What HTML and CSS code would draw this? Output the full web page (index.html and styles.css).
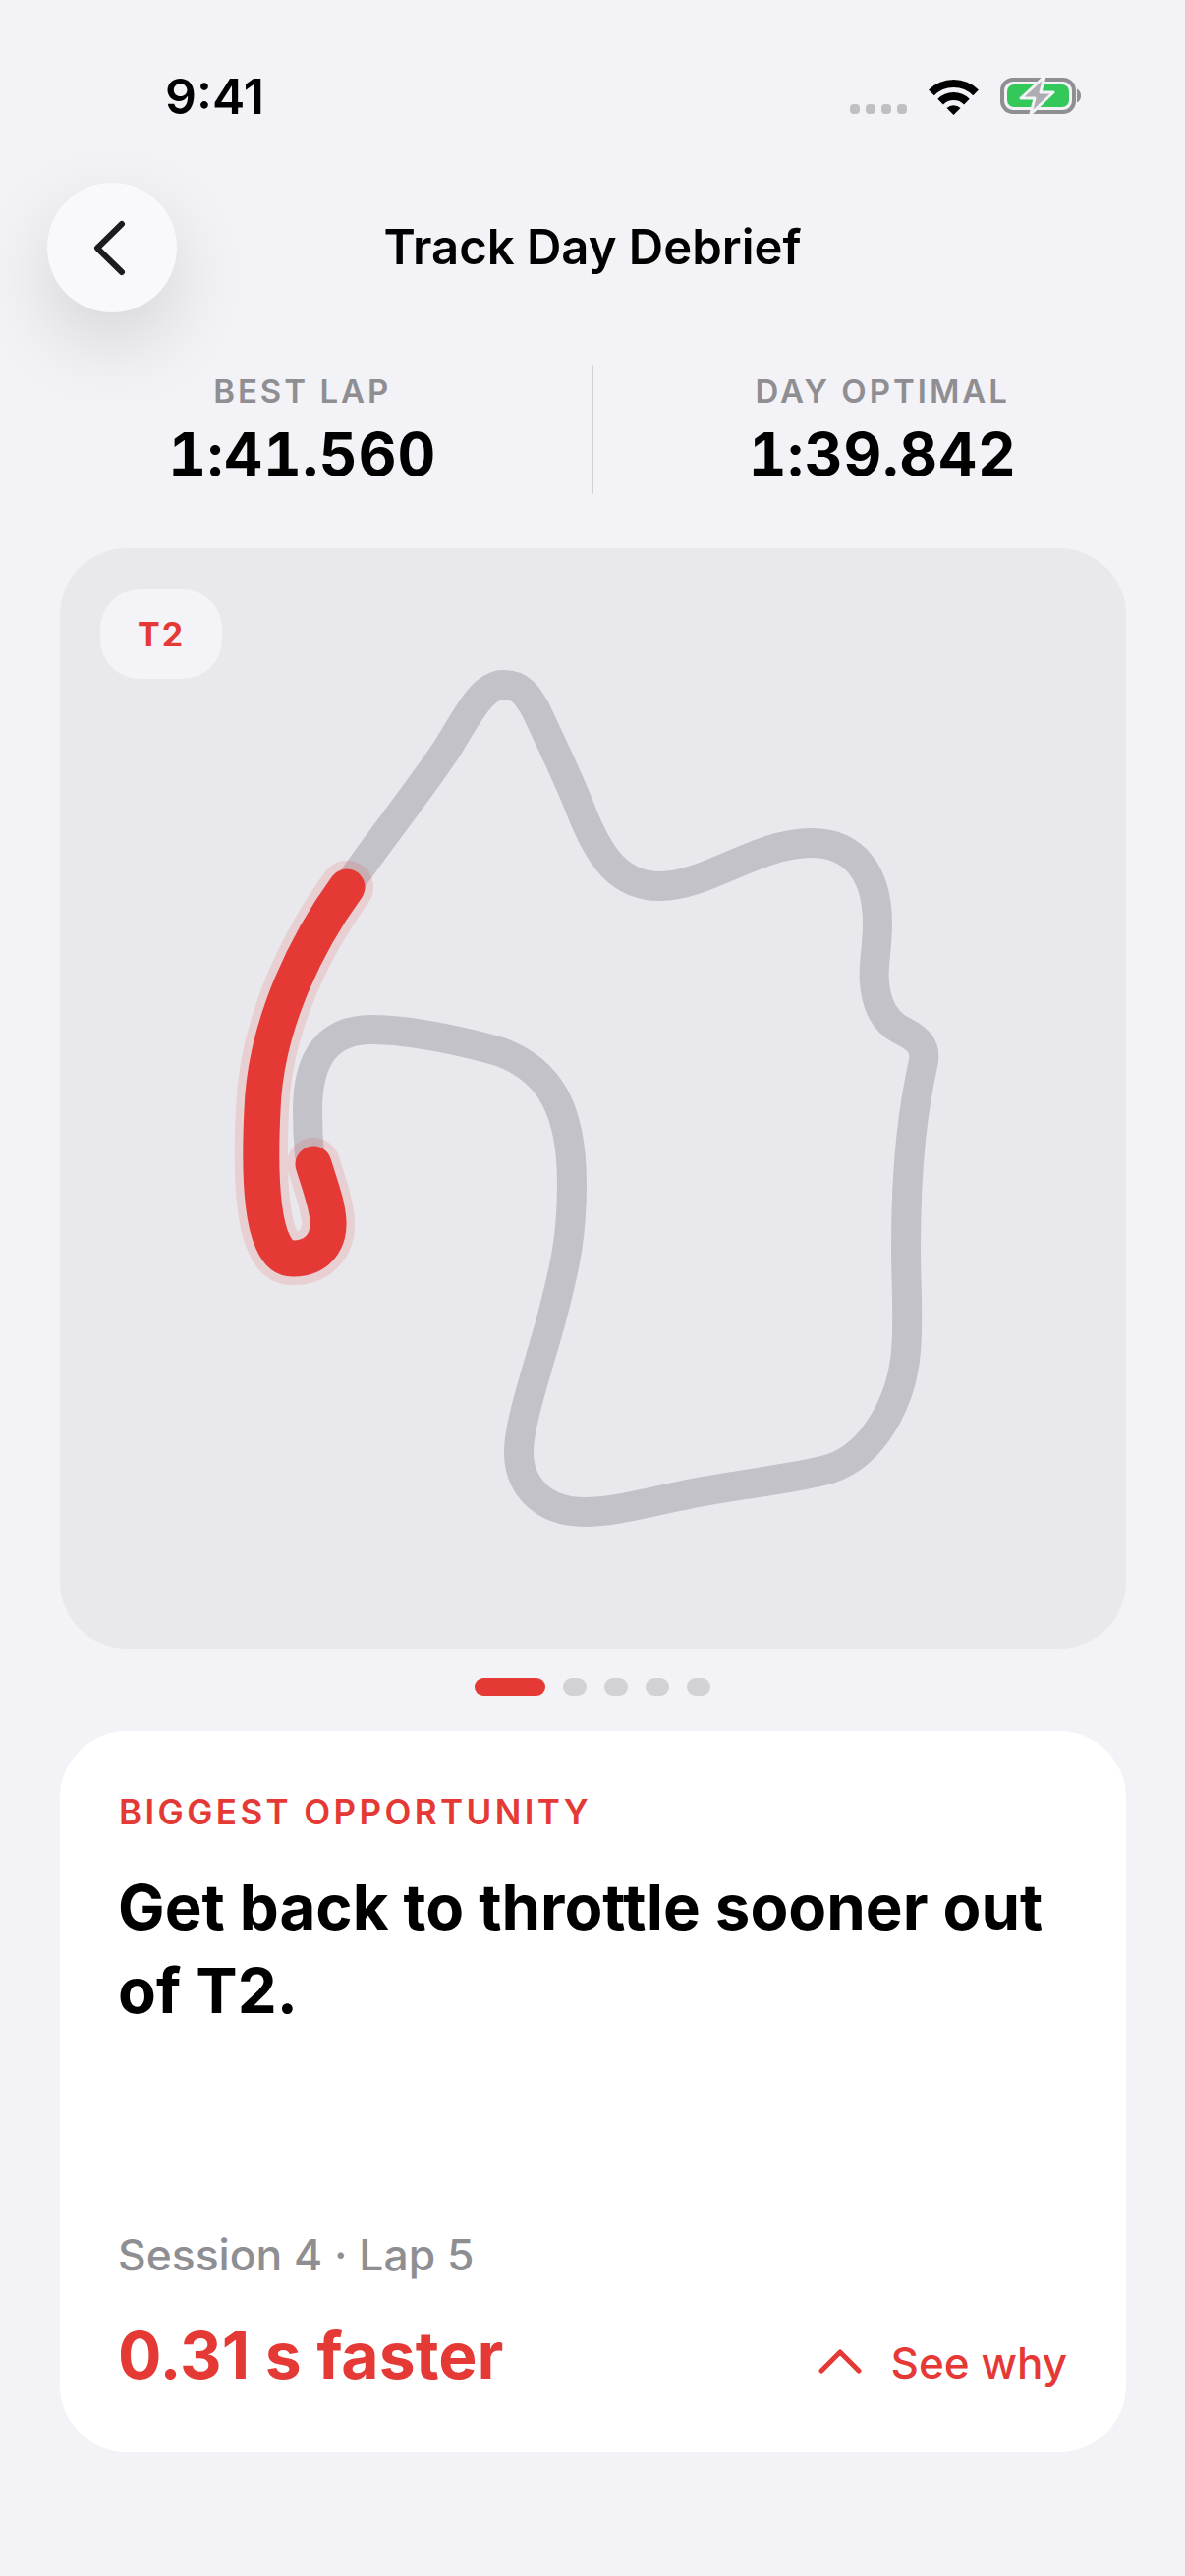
FILE: index.html
```html
<!DOCTYPE html>
<html lang="en">
<head>
<meta charset="utf-8">
<title>Track Day Debrief</title>
<link rel="stylesheet" href="styles.css">
</head>
<body>
<div class="screen">
  <header class="status">
    <span class="time">9:41</span>
    <div class="status-icons">
      <div class="signal"><i></i><i></i><i></i><i></i></div>
      <svg class="wifi" viewBox="0 0 51 37" width="51" height="37">
        <path d="M2.9 14.4A32 32 0 0 1 48.1 14.4" fill="none" stroke="#000" stroke-width="8"/>
        <path d="M12.1 23.6A19 19 0 0 1 38.9 23.6" fill="none" stroke="#000" stroke-width="8"/>
        <path d="M25.5 37L18.5 30A10 10 0 0 1 32.5 30Z" fill="#000"/>
      </svg>
      <svg class="battery" viewBox="0 0 82 40" width="82" height="40">
        <rect x="2" y="4" width="73" height="33" rx="11" fill="none" stroke="#8e8e93" stroke-width="4"/>
        <rect x="7" y="9" width="63" height="23" rx="7" fill="#34c759"/>
        <path d="M78 13.5C81 15 82 17.5 82 20.5S81 26 78 27.5Z" fill="#8e8e93"/>
        <path d="M45 1L21 23H35L31 39L54 17H41Z" fill="#aeaeb2" stroke="#f2f2f7" stroke-width="3" stroke-linejoin="round"/>
      </svg>
    </div>
  </header>

  <nav class="nav">
    <button class="back" aria-label="Back">
      <svg viewBox="0 0 40 64" width="40" height="64">
        <path d="M36 8L11 32.5L36 57" fill="none" stroke="#1c1c1e" stroke-width="6" stroke-linecap="round" stroke-linejoin="round"/>
      </svg>
    </button>
    <h1 class="title">Track Day Debrief</h1>
  </nav>

  <section class="stats">
    <div class="stat">
      <div class="stat-label">BEST LAP</div>
      <div class="stat-value">1:41.560</div>
    </div>
    <div class="stat-rule"></div>
    <div class="stat">
      <div class="stat-label">DAY OPTIMAL</div>
      <div class="stat-value">1:39.842</div>
    </div>
  </section>

  <section class="track-card">
    <svg class="track" viewBox="61 558 1085 1120">
      <path class="track-base" d="M353 903C390 850 430 800 455 762C475 730 490 697 513 697C530 697 537 708 545 722C565 765 580 795 592 827C610 872 630 902 672 902C720 902 770 858 826 858C870 858 893 890 893 940C893 965 888 985 890 1000C892 1025 902 1042 920 1050C935 1058 942 1065 940 1080C930 1125 922 1180 922 1270C922 1310 925 1340 922 1375C918 1425 890 1480 845 1495C810 1505 750 1511 700 1521C660 1529 625 1539 595 1539C550 1539 528 1510 528 1478C528 1450 545 1400 560 1347C575 1290 582 1260 582 1205C582 1130 560 1090 510 1071C480 1062 420 1048 378 1048C335 1048 313 1075 313 1130C313 1150 314 1165 315 1176"/>
      <path class="track-halo" d="M353 903C315 955 270 1040 267 1130C264 1190 264 1281 298 1281C322 1281 335 1265 334 1243C333 1225 325 1205 319 1185"/>
      <path class="track-hot" d="M353 903C315 955 270 1040 267 1130C264 1190 264 1281 298 1281C322 1281 335 1265 334 1243C333 1225 325 1205 319 1185"/>
    </svg>
    <span class="turn-badge">T2</span>
  </section>

  <div class="pager">
    <i class="pager-on"></i><i></i><i></i><i></i><i></i>
  </div>

  <section class="insight">
    <div>
      <div class="eyebrow">BIGGEST OPPORTUNITY</div>
      <h2 class="headline">Get back to throttle sooner out of T2.</h2>
    </div>
    <div>
      <div class="meta">Session 4 · Lap 5</div>
      <div class="insight-foot">
        <span class="gain">0.31 s faster</span>
        <span class="why">
          <svg viewBox="0 0 44 26" width="44" height="26">
            <path d="M3 23L22 4L41 23" fill="none" stroke="#e53935" stroke-width="5" stroke-linecap="round" stroke-linejoin="round"/>
          </svg>
          See why
        </span>
      </div>
    </div>
  </section>
</div>
</body>
</html>
```

FILE: styles.css
```css
* { box-sizing: border-box; }
html, body { margin: 0; padding: 0; }
body {
  background: #f2f2f7;
  font-family: "Inter", "Liberation Sans", sans-serif;
  color: #000;
}
.screen {
  width: 1206px;
  height: 2622px;
  overflow: hidden;
  display: flex;
  flex-direction: column;
}
.status {
  height: 186px;
  padding: 72px 106px 0 168px;
  display: flex;
  justify-content: space-between;
  align-items: flex-start;
}
.time {
  font-size: 50px;
  font-weight: 600;
  line-height: 52px;
}
.status-icons {
  display: flex;
  align-items: flex-end;
  gap: 22px;
  margin-top: 5px;
}
.wifi, .battery { display: block; }
.signal {
  display: flex;
  gap: 6px;
  margin-bottom: 1px;
}
.signal i {
  width: 10px;
  height: 10px;
  border-radius: 4px;
  background: #bfbfc4;
}
.nav {
  display: grid;
  grid-template-columns: 132px 1fr 132px;
  align-items: center;
  padding: 0 48px;
  height: 132px;
}
.back {
  width: 132px;
  height: 132px;
  padding: 0;
  border: 0;
  border-radius: 50%;
  background: #f9f9fd;
  box-shadow: 0 30px 80px rgba(0, 0, 0, 0.13);
  display: flex;
  align-items: center;
  justify-content: center;
}
.back svg { margin-left: -12px; display: block; }
.title {
  margin: 0;
  text-align: center;
  font-size: 49px;
  font-weight: 600;
  line-height: 60px;
}
.stats {
  margin-top: 54px;
  height: 131px;
  padding: 0 13px;
  display: grid;
  grid-template-columns: 1fr 1px 1fr;
  align-items: stretch;
}
.stat { text-align: center; padding-top: 10px; }
.stat-rule { background: #d1d1d6; }
.stat-label {
  font-size: 33px;
  font-weight: 600;
  letter-spacing: 3px;
  line-height: 32px;
  color: #8e8e93;
}
.stat-value {
  margin-top: 12px;
  font-size: 60px;
  font-weight: 700;
  line-height: 72px;
  letter-spacing: 1px;
  font-variant-numeric: tabular-nums;
}
.track-card {
  position: relative;
  margin: 55px 60px 0 61px;
  height: 1120px;
  border-radius: 68px;
  background: #e8e8ed;
  overflow: hidden;
}
.track { display: block; width: 100%; height: 100%; }
.track-base, .track-halo, .track-hot {
  fill: none;
  stroke-linecap: round;
  stroke-linejoin: round;
}
.track-base { stroke: #c2c2c8; stroke-width: 30; }
.track-halo { stroke: rgba(229, 57, 53, 0.14); stroke-width: 54; }
.track-hot { stroke: #e53935; stroke-width: 37; }
.turn-badge {
  position: absolute;
  left: 41px;
  top: 42px;
  width: 124px;
  height: 91px;
  border-radius: 40px;
  background: #f4f4f8;
  color: #e53935;
  font-size: 34px;
  font-weight: 700;
  letter-spacing: 2px;
  display: flex;
  align-items: center;
  justify-content: center;
}
.pager {
  margin-top: 30px;
  height: 18px;
  display: flex;
  justify-content: center;
  gap: 18px;
}
.pager i {
  width: 24px;
  height: 18px;
  border-radius: 9px;
  background: #d1d1d6;
}
.pager .pager-on { width: 72px; background: #e53935; }
.insight {
  margin: 36px 60px 0 61px;
  height: 734px;
  padding: 61px 60px 58px 59px;
  border-radius: 68px;
  background: #fff;
  display: flex;
  flex-direction: column;
  justify-content: space-between;
}
.eyebrow {
  margin-left: 1px;
  font-size: 35px;
  font-weight: 600;
  letter-spacing: 3.4px;
  line-height: 42px;
  color: #e53935;
}
.headline {
  margin: 33px 0 0;
  font-size: 63.5px;
  font-weight: 700;
  line-height: 85px;
}
.meta {
  font-size: 44.4px;
  font-weight: 500;
  line-height: 52px;
  color: #8e8e93;
}
.insight-foot {
  margin-top: 38px;
  display: flex;
  justify-content: space-between;
  align-items: baseline;
}
.gain {
  font-size: 66px;
  font-weight: 700;
  line-height: 76px;
  color: #e53935;
}
.why {
  display: flex;
  align-items: center;
  gap: 30px;
  font-size: 44px;
  font-weight: 500;
  line-height: 56px;
  color: #e53935;
  position: relative;
  top: -5px;
}
.why svg { display: block; margin-top: -4px; }
```
